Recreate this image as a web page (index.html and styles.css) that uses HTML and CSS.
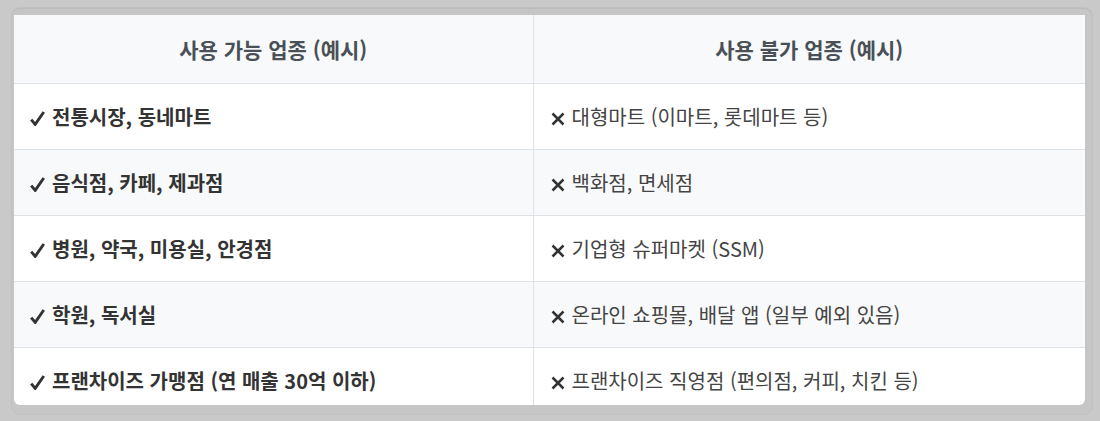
FILE: index.html
```html
<!DOCTYPE html>
<html lang="ko">
<head>
<meta charset="utf-8">
<link rel="stylesheet" href="styles.css">
</head>
<body>
<div class="frame">
  <div class="scroller">
    <table class="biz">
      <colgroup><col class="c1"><col class="c2"></colgroup>
      <thead>
        <tr><th>사용 가능 업종 (예시)</th><th>사용 불가 업종 (예시)</th></tr>
      </thead>
      <tbody>
        <tr><td class="ok"><svg class="mk" viewBox="0 0 15 15"><path d="M1.2 8.6 L5.2 13.4 L13.8 1" /></svg>전통시장, 동네마트</td><td class="no"><svg class="mk" viewBox="0 0 14 14"><path d="M1.5 1.5 L12.5 12.5 M12.5 1.5 L1.5 12.5" /></svg>대형마트 (이마트, 롯데마트 등)</td></tr>
        <tr><td class="ok"><svg class="mk" viewBox="0 0 15 15"><path d="M1.2 8.6 L5.2 13.4 L13.8 1" /></svg>음식점, 카페, 제과점</td><td class="no"><svg class="mk" viewBox="0 0 14 14"><path d="M1.5 1.5 L12.5 12.5 M12.5 1.5 L1.5 12.5" /></svg>백화점, 면세점</td></tr>
        <tr><td class="ok"><svg class="mk" viewBox="0 0 15 15"><path d="M1.2 8.6 L5.2 13.4 L13.8 1" /></svg>병원, 약국, 미용실, 안경점</td><td class="no"><svg class="mk" viewBox="0 0 14 14"><path d="M1.5 1.5 L12.5 12.5 M12.5 1.5 L1.5 12.5" /></svg>기업형 슈퍼마켓 (SSM)</td></tr>
        <tr><td class="ok"><svg class="mk" viewBox="0 0 15 15"><path d="M1.2 8.6 L5.2 13.4 L13.8 1" /></svg>학원, 독서실</td><td class="no"><svg class="mk" viewBox="0 0 14 14"><path d="M1.5 1.5 L12.5 12.5 M12.5 1.5 L1.5 12.5" /></svg>온라인 쇼핑몰, 배달 앱 (일부 예외 있음)</td></tr>
        <tr><td class="ok"><svg class="mk" viewBox="0 0 15 15"><path d="M1.2 8.6 L5.2 13.4 L13.8 1" /></svg>프랜차이즈 가맹점 (연 매출 30억 이하)</td><td class="no"><svg class="mk" viewBox="0 0 14 14"><path d="M1.5 1.5 L12.5 12.5 M12.5 1.5 L1.5 12.5" /></svg>프랜차이즈 직영점 (편의점, 커피, 치킨 등)</td></tr>
      </tbody>
    </table>
  </div>
</div>
</body>
</html>
```
FILE: styles.css
```css
html, body {
  margin: 0;
  padding: 0;
  background: #c9c9c9;
}
body {
  padding: 8px 8px 7px 12px;
  font-family: "Noto Sans CJK KR", "Noto Sans", sans-serif;
}
.frame {
  height: 390px;
  padding: 7px 7px 9px 2px;
  border-radius: 8px;
  background: #c6c6c6;
  box-shadow: 0 0 0 1px rgba(0,0,0,0.04), inset 0 1px 0 rgba(0,0,0,0.06);
}
.scroller {
  height: 390px;
  overflow: hidden;
  background: #fff;
  border-radius: 0 0 6px 6px;
}
.biz {
  width: 100%;
  border-collapse: collapse;
  table-layout: fixed;
}
.c1 { width: 519px; }
.biz th {
  height: 68px;
  background: #f8f9fa;
  color: #495057;
  font-size: 21px;
  font-weight: 700;
  text-align: center;
  border-bottom: 1px solid #dee2e6;
  padding: 0 16px;
}
.biz th + th, .biz td + td {
  border-left: 1px solid #dee2e6;
}
.biz td {
  height: 65px;
  padding: 0 16px;
  font-size: 20px;
  border-bottom: 1px solid #dee2e6;
  white-space: nowrap;
}
.biz tbody tr:nth-child(even) td {
  background: #f8f9fa;
}
.mk {
  fill: none;
  stroke: #333;
}
.ok .mk {
  width: 15px;
  height: 15px;
  margin-right: 7px;
  vertical-align: -1px;
  stroke-width: 2.9;
  stroke-linejoin: miter;
}
.no .mk {
  width: 14px;
  height: 14px;
  margin-left: 1px;
  margin-right: 7px;
  vertical-align: -1px;
  stroke-width: 2.5;
}
.ok {
  font-weight: 700;
  color: #333;
}
.no {
  color: #444;
}
```
